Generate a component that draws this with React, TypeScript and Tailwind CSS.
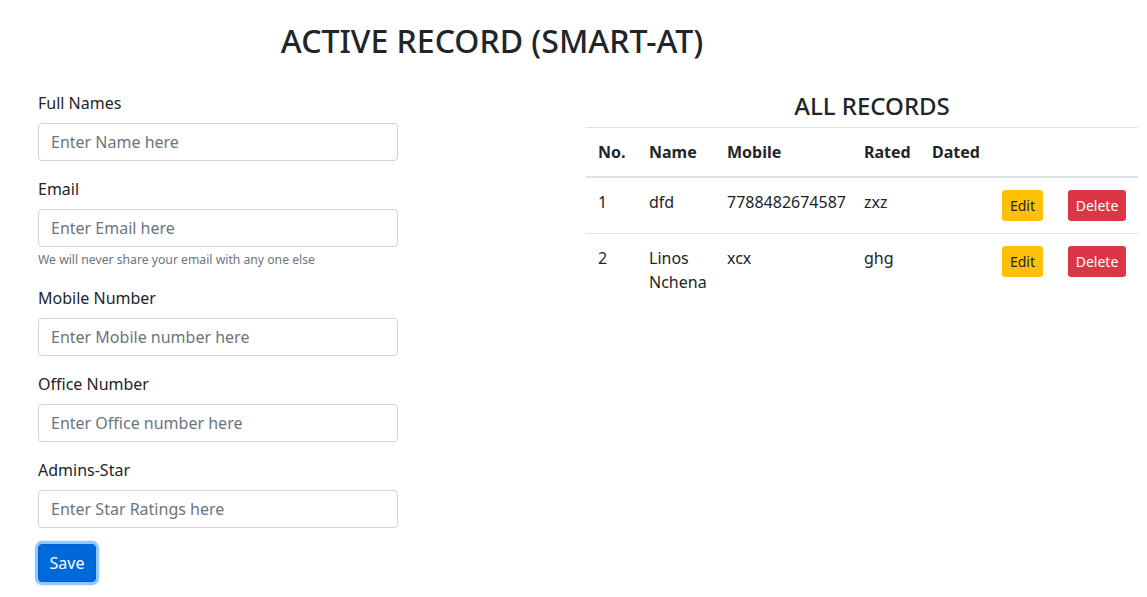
import React from "react";

const font = { fontFamily: '"Noto Sans", "Segoe UI", Roboto, "Liberation Sans", sans-serif' };

function Field({ label, placeholder, help }: { label: string; placeholder: string; help?: string }) {
  return (
    <div className="mb-4">
      <label className="block mb-2 text-[16px] leading-6 text-[#212529]">{label}</label>
      <input
        className="block w-full h-[38px] px-3 text-[16px] leading-6 text-[#495057] bg-white border border-[#ced4da] rounded-[4px] outline-none placeholder:text-[#6c757d]"
        placeholder={placeholder}
      />
      {help && <small className="block mt-1 text-[12.2px] leading-[18.5px] text-[#6c757d]">{help}</small>}
    </div>
  );
}

const rows = [
  { no: "1", name: "dfd", mobile: "7788482674587", rated: "zxz", dated: "" },
  { no: "2", name: "Linos Nchena", mobile: "xcx", rated: "ghg", dated: "" },
];

export default function App() {
  return (
    <div className="min-h-[597px] bg-white text-[#212529] text-[16px] leading-6" style={font}>
      <div className="pt-[22px]">
        <h2 className="w-[984px] text-center text-[32px] leading-[38px] font-medium mb-[31px]">ACTIVE RECORD (SMART-AT)</h2>
      </div>
      <div className="flex">
        <div className="ml-[38px] w-[360px]">
          <Field label="Full Names" placeholder="Enter Name here" />
          <Field label="Email" placeholder="Enter Email here" help="We will never share your email with any one else" />
          <Field label="Mobile Number" placeholder="Enter Mobile number here" />
          <Field label="Office Number" placeholder="Enter Office number here" />
          <Field label="Admins-Star" placeholder="Enter Star Ratings here" />
          <button className="w-[58px] h-[38px] px-0 text-[16px] leading-6 text-white bg-[#0069d9] border border-[#0062cc] rounded-[4px] shadow-[0_0_0_3.2px_rgba(38,143,255,0.5)]">
            Save
          </button>
        </div>
        <div className="ml-[188px] w-[552px]">
          <h4 className="w-[572px] text-center text-[24px] leading-[29px] font-medium mb-[7px]">ALL RECORDS</h4>
          <table className="w-[552px] table-fixed border-collapse text-left">
            <colgroup>
              <col className="w-[51px]" />
              <col className="w-[78px]" />
              <col className="w-[137px]" />
              <col className="w-[68px]" />
              <col className="w-[70px]" />
              <col className="w-[66px]" />
              <col className="w-[82px]" />
            </colgroup>
            <thead>
              <tr>
                {["No.", "Name", "Mobile", "Rated", "Dated", "", ""].map((h, i) => (
                  <th key={i} className="p-3 align-bottom font-bold border-t border-[#dee2e6] border-b-2 whitespace-nowrap">
                    {h}
                  </th>
                ))}
              </tr>
            </thead>
            <tbody>
              {rows.map((r, i) => (
                <tr key={r.no}>
                  {[r.no, r.name, r.mobile, r.rated, r.dated].map((c, j) => (
                    <td key={j} className={`p-3 align-top ${i > 0 ? "border-t border-[#dee2e6]" : ""}`}>
                      {c}
                    </td>
                  ))}
                  <td className={`p-3 align-top ${i > 0 ? "border-t border-[#dee2e6]" : ""}`}>
                    <button className="w-[41px] h-[31px] px-0 text-[14px] leading-[21px] text-[#212529] bg-[#ffc107] rounded-[3.2px]">Edit</button>
                  </td>
                  <td className={`p-3 align-top ${i > 0 ? "border-t border-[#dee2e6]" : ""}`}>
                    <button className="w-[58px] h-[31px] px-0 text-[14px] leading-[21px] text-white bg-[#dc3545] rounded-[3.2px]">Delete</button>
                  </td>
                </tr>
              ))}
            </tbody>
          </table>
        </div>
      </div>
    </div>
  );
}
